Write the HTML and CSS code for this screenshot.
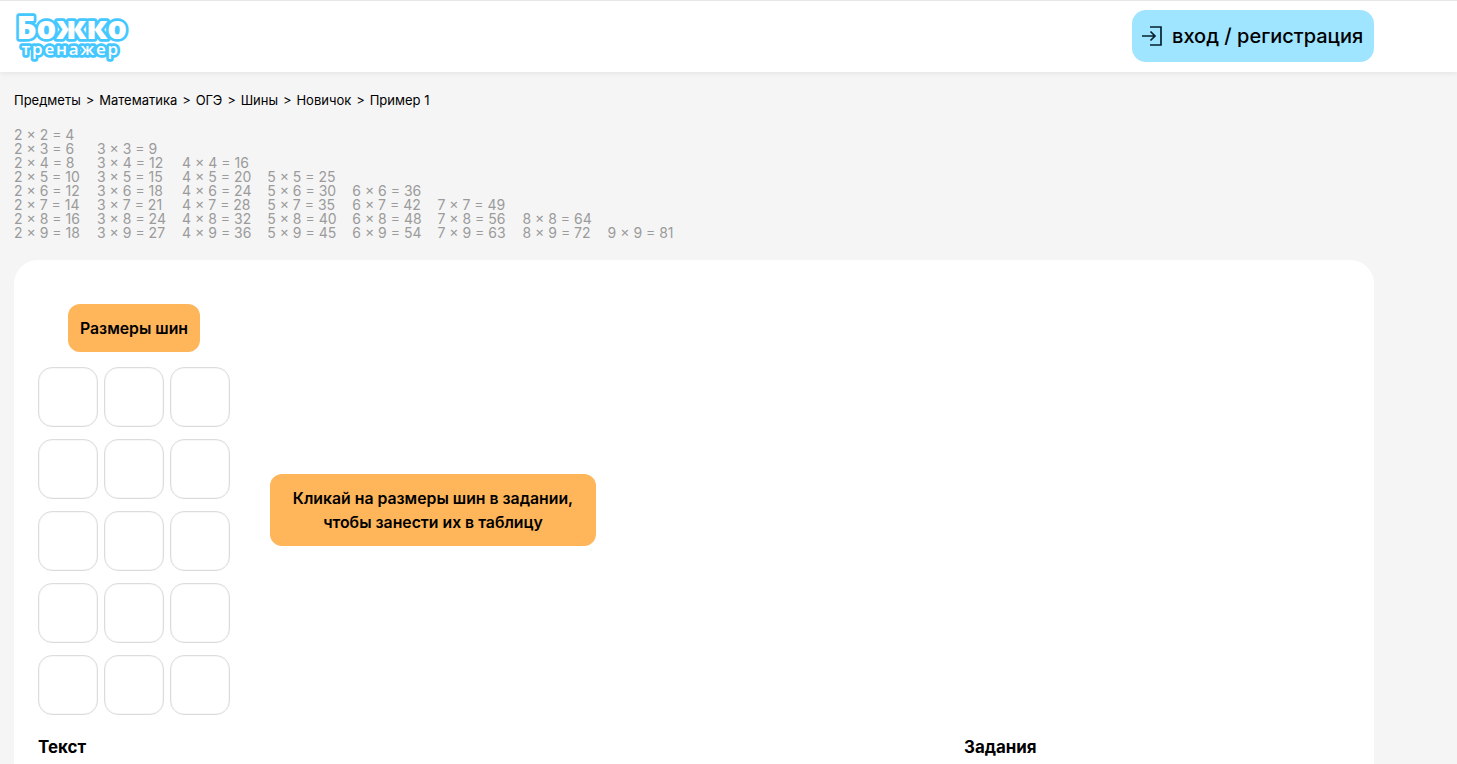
FILE: index.html
```html
<!DOCTYPE html>
<html lang="ru">
<head>
<meta charset="utf-8">
<title>Божко тренажер</title>
<link rel="stylesheet" href="styles.css">
</head>
<body>
<header class="header">
  <div class="header-inner">
    <a class="logo" href="#">
      <svg width="122" height="54" viewBox="0 0 122 54">
        <text x="2.500" y="29" class="logo-big">Божко</text>
        <text x="7.500" y="45" class="logo-small">тренажер</text>
      </svg>
    </a>
    <a class="login" href="#">
      <svg class="login-icon" width="22" height="22" viewBox="0 0 22 22" fill="none" stroke="#06222c" stroke-width="1.7">
        <path d="M9 2H20V20H9"/>
        <path d="M1 11H14M9.500 6.500L14 11L9.500 15.500"/>
      </svg>
      <span>вход / регистрация</span>
    </a>
  </div>
</header>
<main class="main">
  <nav class="crumbs">
    <span>Предметы</span><span>&gt;</span><span>Математика</span><span>&gt;</span><span>ОГЭ</span><span>&gt;</span><span>Шины</span><span>&gt;</span><span>Новичок</span><span>&gt;</span><span>Пример 1</span>
  </nav>
  <div class="times">
    <div class="row"><span>2 × 2 = 4</span></div>
    <div class="row"><span>2 × 3 = 6</span><span>3 × 3 = 9</span></div>
    <div class="row"><span>2 × 4 = 8</span><span>3 × 4 = 12</span><span>4 × 4 = 16</span></div>
    <div class="row"><span>2 × 5 = 10</span><span>3 × 5 = 15</span><span>4 × 5 = 20</span><span>5 × 5 = 25</span></div>
    <div class="row"><span>2 × 6 = 12</span><span>3 × 6 = 18</span><span>4 × 6 = 24</span><span>5 × 6 = 30</span><span>6 × 6 = 36</span></div>
    <div class="row"><span>2 × 7 = 14</span><span>3 × 7 = 21</span><span>4 × 7 = 28</span><span>5 × 7 = 35</span><span>6 × 7 = 42</span><span>7 × 7 = 49</span></div>
    <div class="row"><span>2 × 8 = 16</span><span>3 × 8 = 24</span><span>4 × 8 = 32</span><span>5 × 8 = 40</span><span>6 × 8 = 48</span><span>7 × 8 = 56</span><span>8 × 8 = 64</span></div>
    <div class="row"><span>2 × 9 = 18</span><span>3 × 9 = 27</span><span>4 × 9 = 36</span><span>5 × 9 = 45</span><span>6 × 9 = 54</span><span>7 × 9 = 63</span><span>8 × 9 = 72</span><span>9 × 9 = 81</span></div>
  </div>
  <section class="card">
    <div class="top">
      <div class="sizes">
        <div class="sizes-title">Размеры шин</div>
        <div class="grid">
          <div class="cell"></div><div class="cell"></div><div class="cell"></div>
          <div class="cell"></div><div class="cell"></div><div class="cell"></div>
          <div class="cell"></div><div class="cell"></div><div class="cell"></div>
          <div class="cell"></div><div class="cell"></div><div class="cell"></div>
          <div class="cell"></div><div class="cell"></div><div class="cell"></div>
        </div>
      </div>
      <div class="hint">Кликай на размеры шин в задании,<br>чтобы занести их в таблицу</div>
    </div>
    <div class="columns">
      <h2 class="col-title">Текст</h2>
      <h2 class="col-title">Задания</h2>
    </div>
  </section>
</main>
</body>
</html>
```
FILE: styles.css
```css
* { box-sizing: border-box; }
html, body { height: 100%; }
body {
  margin: 0;
  overflow: hidden;
  background: #f5f5f5;
  font-family: Inter, "Noto Sans", sans-serif;
  color: #000;
}
a { color: inherit; text-decoration: none; }
.header {
  height: 72px;
  background: #fff;
  border-top: 1px solid #e6e6e6;
  box-shadow: 0 1px 6px rgba(0, 0, 0, 0.08);
}
.header-inner {
  width: 1374px;
  height: 100%;
  padding-left: 14px;
  display: flex;
  align-items: center;
  justify-content: space-between;
}
.logo { display: block; height: 54px; }
.logo svg { display: block; overflow: visible; }
.logo text {
  fill: #fff;
  stroke: #45c8ff;
  stroke-linejoin: round;
  paint-order: stroke;
}
.logo-big { font: 800 31px "Open Sans", sans-serif; stroke-width: 5.5px; }
.logo-small { font: 600 17px "Open Sans", sans-serif; letter-spacing: 1.8px; stroke-width: 5.5px; }
.login {
  width: 242px;
  height: 52px;
  margin-top: -1px;
  padding-left: 9px;
  display: flex;
  align-items: center;
  gap: 9px;
  background: #9fe5ff;
  border-radius: 14px;
  font-size: 20px;
  font-weight: 500;
}
.login-icon { flex: none; }
.main { width: 1374px; padding-left: 14px; }
.crumbs {
  margin-top: 20px;
  display: flex;
  gap: 4.9px;
  font-size: 13px;
  line-height: 16px;
}
.times {
  margin-top: 20px;
  color: #9b9b9b;
  font-size: 14px;
  line-height: 14px;
}
.row { display: flex; height: 14px; }
.row span { width: 85.1px; flex: none; white-space: nowrap; }
.row span:first-child { width: 83px; }
.card {
  margin-top: 20px;
  height: 600px;
  padding: 44px 24px 0;
  background: #fff;
  border-radius: 24px;
}
.top { display: flex; align-items: flex-start; }
.sizes { width: 192px; display: flex; flex-direction: column; align-items: center; }
.sizes-title {
  width: 132px;
  height: 48px;
  display: flex;
  align-items: center;
  justify-content: center;
  background: #ffb55a;
  border-radius: 12px;
  font-size: 15.8px;
  font-weight: 600;
}
.grid {
  margin-top: 15px;
  display: grid;
  grid-template-columns: repeat(3, 60px);
  grid-auto-rows: 60px;
  column-gap: 6px;
  row-gap: 12px;
}
.cell { border: 1px solid #dcdcdc; box-shadow: inset 0 0 0 1px #f7f7f7; border-radius: 14px; }
.hint {
  width: 326px;
  height: 72px;
  margin: 170px 0 0 40px;
  padding-top: 2px;
  display: flex;
  align-items: center;
  justify-content: center;
  text-align: center;
  background: #ffb55a;
  border-radius: 12px;
  font-size: 15.8px;
  font-weight: 600;
  line-height: 24px;
}
.columns { margin-top: 20px; display: flex; }
.col-title { margin: 0; font-size: 16.9px; font-weight: 700; line-height: 24px; }
.col-title:first-child { width: 926px; }
```
